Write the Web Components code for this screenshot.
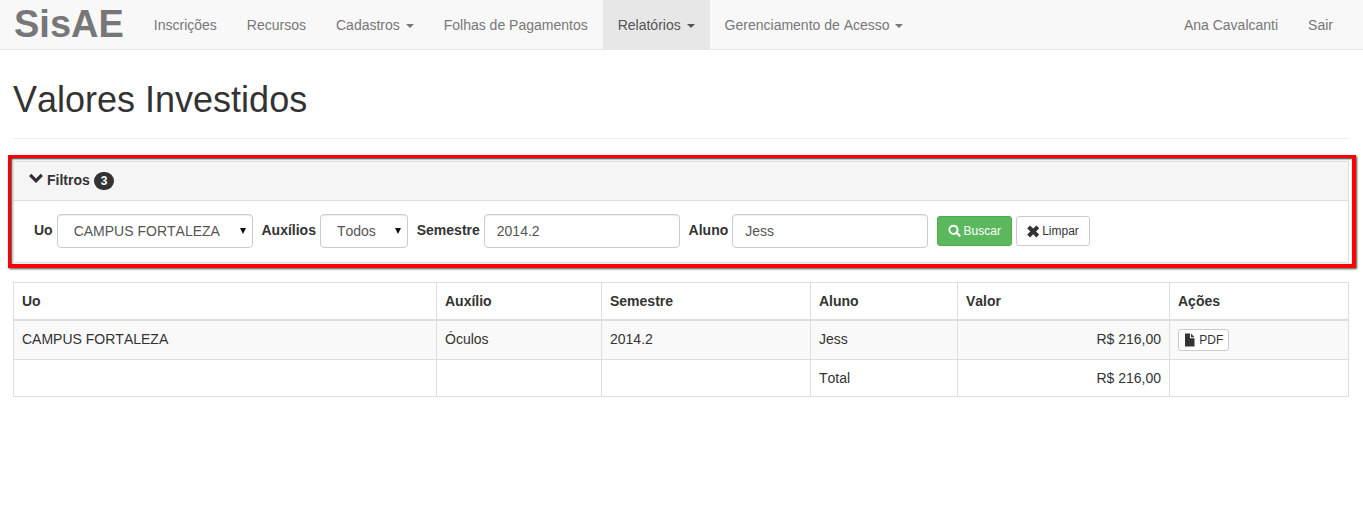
<!DOCTYPE html>
<html lang="pt-BR">
<head>
<meta charset="UTF-8">
<title>SisAE - Valores Investidos</title>
<style>
  html, body { margin: 0; padding: 0; background: #fff; }
  body { font: 14px/20px "Liberation Sans", Arial, sans-serif; font-kerning: none; color: #333; }
  main { display: block; padding: 0 14px 0 13px; }
</style>
</head>
<body>
<app-navbar>
  <nav-item>Inscrições</nav-item>
  <nav-item>Recursos</nav-item>
  <nav-item caret>Cadastros</nav-item>
  <nav-item>Folhas de Pagamentos</nav-item>
  <nav-item caret active>Relatórios</nav-item>
  <nav-item caret>Gerenciamento de Acesso</nav-item>
  <nav-item slot="right">Ana Cavalcanti</nav-item>
  <nav-item slot="right">Sair</nav-item>
</app-navbar>
<main>
  <page-header>Valores Investidos</page-header>
  <filter-panel count="3">
    <filter-field label="Uo"><filter-select value="CAMPUS FORTALEZA" width="196"></filter-select></filter-field>
    <filter-field label="Auxílios"><filter-select value="Todos" width="88"></filter-select></filter-field>
    <filter-field label="Semestre"><filter-input value="2014.2"></filter-input></filter-field>
    <filter-field label="Aluno"><filter-input value="Jess"></filter-input></filter-field>
    <action-button slot="actions" kind="success" icon="search">Buscar</action-button>
    <action-button slot="actions" icon="remove">Limpar</action-button>
  </filter-panel>
  <results-table></results-table>
</main>

<script>
  const ICONS = {
    search: '<path fill-rule="evenodd" d="M5.4 .8a5 5 0 1 0 2.9 9.1l3 3.2 1.7-1.7-3.1-3A5 5 0 0 0 5.4 .8zm0 1.9a3.1 3.1 0 1 1 0 6.2 3.1 3.1 0 0 1 0-6.2z"/>',
    remove: '<path d="M3 1.4 6.2 4.6 9.4 1.4 12.2 4.2 9 7.4 12.2 10.6 9.4 13.4 6.2 10.2 3 13.4 .2 10.6 3.4 7.4 .2 4.2z"/>',
    file: '<path d="M1 .5H6V5.2H10.5V13.5H1zM7 .5 10.5 4.2H7z"/>',
    chevron: '<path d="M0 5 2.3 2.7 7 7.4 11.7 2.7 14 5 7 12z"/>'
  };

  class AppNavbar extends HTMLElement {
    constructor() {
      super();
      this.attachShadow({ mode: 'open' });
      this.shadowRoot.innerHTML = `
        <style>
          :host { display: flex; height: 49px; background: #f8f8f8; border-bottom: 1px solid #e7e7e7; padding: 0 15px 0 14px; }
          .brand { font-size: 38px; font-weight: bold; line-height: 48px; color: #777; margin-right: 15px; }
          .left, .right { display: flex; }
          .right { margin-left: auto; }
        </style>
        <div class="brand">SisAE</div>
        <div class="left"><slot></slot></div>
        <div class="right"><slot name="right"></slot></div>
      `;
    }
  }

  class NavItem extends HTMLElement {
    constructor() {
      super();
      this.attachShadow({ mode: 'open' });
      this.shadowRoot.innerHTML = `
        <style>
          :host { display: block; padding: 15px; line-height: 20px; height: 19px; color: #777; white-space: nowrap; }
          :host([active]) { background: #e7e7e7; color: #555; }
          .caret { display: none; width: 0; height: 0; margin-left: 2px; vertical-align: middle; border-top: 4px solid; border-left: 4px solid transparent; border-right: 4px solid transparent; }
          :host([caret]) .caret { display: inline-block; }
        </style>
        <slot></slot> <span class="caret"></span>
      `;
    }
  }

  class PageHeader extends HTMLElement {
    constructor() {
      super();
      this.attachShadow({ mode: 'open' });
      this.shadowRoot.innerHTML = `
        <style>
          :host { display: block; margin: 30px 0 16px; padding-bottom: 18px; border-bottom: 1px solid #eee; }
          h1 { margin: 0; font-size: 36px; font-weight: 500; line-height: 40px; color: #333; }
        </style>
        <h1><slot></slot></h1>
      `;
    }
  }

  class FilterPanel extends HTMLElement {
    constructor() {
      super();
      this.attachShadow({ mode: 'open' });
      this.shadowRoot.innerHTML = `
        <style>
          /* the red frame is part of the screenshot, it hugs the panel unevenly */
          :host { display: block; margin: 0 -7px 14px -5px; border: solid #f00; border-width: 3px 4px 4px 3px; padding: 3px 3px 1px 2px; box-shadow: 1px 1px 2px rgba(0,0,0,.7), inset 1px 1px 2px rgba(0,0,0,.8); }
          .panel { border: 1px solid #ddd; background: #fff; }
          .head { display: flex; align-items: center; height: 36px; padding: 0 15px 2px; background: #f5f5f5; border-bottom: 1px solid #ddd; font-weight: bold; }
          .head svg { width: 14px; height: 14px; margin-right: 4px; fill: #333; position: relative; top: -2px; }
          .badge { margin-left: 4px; min-width: 6px; padding: 3px 7px; border-radius: 10px; background: #333; color: #fff; font-size: 12px; line-height: 12px; position: relative; top: 1px; }
          .body { display: flex; align-items: center; padding: 13px 20px 14px; }
          .fields { display: flex; gap: 8.8px; }
          .actions { display: flex; gap: 4px; margin-left: 9px; }
        </style>
        <div class="panel">
          <div class="head"><svg viewBox="0 0 14 14">${ICONS.chevron}</svg>Filtros <span class="badge">${this.getAttribute('count')}</span></div>
          <div class="body">
            <div class="fields"><slot></slot></div>
            <div class="actions"><slot name="actions"></slot></div>
          </div>
        </div>
      `;
    }
  }

  class FilterField extends HTMLElement {
    constructor() {
      super();
      this.attachShadow({ mode: 'open' });
      this.shadowRoot.innerHTML = `
        <style>
          :host { display: flex; align-items: center; gap: 4px; }
          label { font-weight: bold; position: relative; top: -1px; }
        </style>
        <label>${this.getAttribute('label')}</label><slot></slot>
      `;
    }
  }

  class FilterSelect extends HTMLElement {
    constructor() {
      super();
      this.attachShadow({ mode: 'open' });
      this.shadowRoot.innerHTML = `
        <style>
          :host { display: block; position: relative; width: ${this.getAttribute('width')}px; }
          select { appearance: none; display: block; width: 100%; height: 34px; box-sizing: border-box; padding: 0 16px; border: 1px solid #ccc; border-radius: 4px; background: #fff; color: #555; font: inherit; box-shadow: inset 0 1px 1px rgba(0,0,0,.075); }
          .arrow { position: absolute; right: 7px; top: 14px; width: 0; height: 0; border-top: 6px solid #111; border-left: 3px solid transparent; border-right: 3px solid transparent; }
        </style>
        <select><option>${this.getAttribute('value')}</option></select>
        <span class="arrow"></span>
      `;
    }
  }

  class FilterInput extends HTMLElement {
    constructor() {
      super();
      this.attachShadow({ mode: 'open' });
      this.shadowRoot.innerHTML = `
        <style>
          :host { display: block; }
          input { display: block; width: 196px; height: 34px; box-sizing: border-box; padding: 6px 12px; border: 1px solid #ccc; border-radius: 4px; color: #555; font: inherit; box-shadow: inset 0 1px 1px rgba(0,0,0,.075); }
        </style>
        <input type="text" value="${this.getAttribute('value')}">
      `;
    }
  }

  class ActionButton extends HTMLElement {
    constructor() {
      super();
      this.attachShadow({ mode: 'open' });
      const icon = ICONS[this.getAttribute('icon')];
      this.shadowRoot.innerHTML = `
        <style>
          :host { display: block; }
          button { display: flex; align-items: center; gap: 3.3px; height: 30px; padding: 0 10px; border: 1px solid #ccc; border-radius: 3px; background: #fff; color: #333; font: 12px/18px "Liberation Sans", Arial, sans-serif; font-kerning: none; }
          svg { width: 12px; height: 14px; fill: currentColor; overflow: visible; }
          :host([kind="success"]) button { background: #5cb85c; border-color: #4cae4c; color: #fff; }
          :host([size="xs"]) button { height: 22px; padding: 0 5px; gap: 3.3px; }
        </style>
        <button type="button"><svg viewBox="0 0 12 14">${icon}</svg><slot></slot></button>
      `;
    }
  }

  class ResultsTable extends HTMLElement {
    constructor() {
      super();
      this.attachShadow({ mode: 'open' });
      this.shadowRoot.innerHTML = `
        <style>
          :host { display: block; }
          table { width: 100%; table-layout: fixed; border-collapse: collapse; }
          th, td { padding: 8px; border: 1px solid #ddd; text-align: left; vertical-align: top; line-height: 20px; }
          thead th { border-bottom-width: 2px; vertical-align: bottom; }
          tbody tr:first-child { background: #f9f9f9; }
          .num { text-align: right; }
        </style>
        <table>
          <colgroup><col style="width:423px"><col style="width:165px"><col style="width:209px"><col style="width:147px"><col style="width:212px"><col></colgroup>
          <thead><tr><th>Uo</th><th>Auxílio</th><th>Semestre</th><th>Aluno</th><th>Valor</th><th>Ações</th></tr></thead>
          <tbody>
            <tr><td>CAMPUS FORTALEZA</td><td>Óculos</td><td>2014.2</td><td>Jess</td><td class="num">R$ 216,00</td><td><action-button size="xs" icon="file">PDF</action-button></td></tr>
            <tr><td></td><td></td><td></td><td>Total</td><td class="num">R$ 216,00</td><td></td></tr>
          </tbody>
        </table>
      `;
    }
  }

  customElements.define('action-button', ActionButton);
  customElements.define('app-navbar', AppNavbar);
  customElements.define('nav-item', NavItem);
  customElements.define('page-header', PageHeader);
  customElements.define('filter-panel', FilterPanel);
  customElements.define('filter-field', FilterField);
  customElements.define('filter-select', FilterSelect);
  customElements.define('filter-input', FilterInput);
  customElements.define('results-table', ResultsTable);
</script>
</body>
</html>
